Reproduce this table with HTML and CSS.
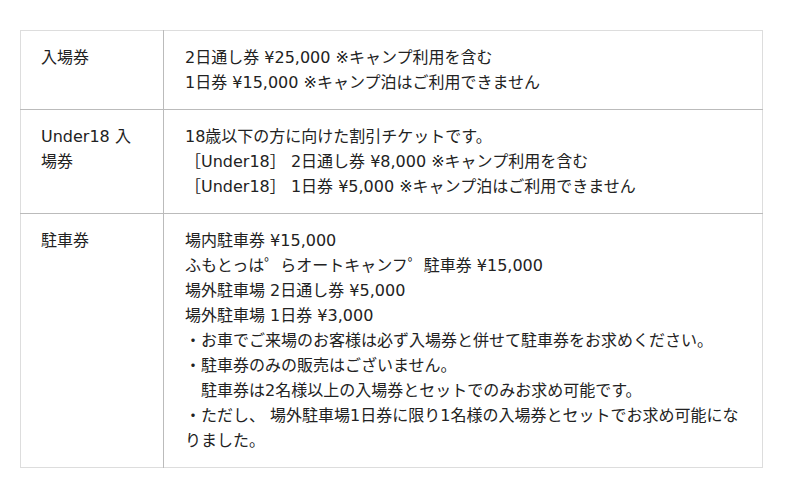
FILE: index.html
```html
<!DOCTYPE html>
<html lang="ja">
<head>
<meta charset="utf-8">
<link rel="stylesheet" href="styles.css">
</head>
<body>
<div class="wrap">
<table class="tickets">
<tbody>
<tr>
<th>入場券</th>
<td>2日通し券 ¥25,000 ※キャンプ利用を含む<br>1日券 ¥15,000 ※キャンプ泊はご利用できません</td>
</tr>
<tr>
<th>Under18 入場券</th>
<td>18歳以下の方に向けた割引チケットです。<br>［Under18］ 2日通し券 ¥8,000 ※キャンプ利用を含む<br>［Under18］ 1日券 ¥5,000 ※キャンプ泊はご利用できません</td>
</tr>
<tr>
<th>駐車券</th>
<td>場内駐車券 ¥15,000<br>ふもとっは&#x309C;らオートキャンフ&#x309C;駐車券 ¥15,000<br>場外駐車場 2日通し券 ¥5,000<br>場外駐車場 1日券 ¥3,000<br>・お車でご来場のお客様は必ず入場券と併せて駐車券をお求めください。<br>・駐車券のみの販売はございません。<br>　駐車券は2名様以上の入場券とセットでのみお求め可能です。<br>・ただし、 場外駐車場1日券に限り1名様の入場券とセットでお求め可能になりました。</td>
</tr>
</tbody>
</table>
</div>
</body>
</html>
```
FILE: styles.css
```css
html, body {
  margin: 0;
  padding: 0;
  background: #fff;
}
body {
  font-family: "DejaVu Sans", "Noto Sans CJK JP", sans-serif;
  font-size: 16px;
  line-height: 25px;
  color: #222;
}
.wrap {
  padding: 30px 38px 0 20px;
}
.tickets {
  width: 743px;
  border-collapse: collapse;
  border: 1px solid #ddd;
}
.tickets th,
.tickets td {
  text-align: left;
  vertical-align: top;
  font-weight: normal;
  padding: 14px 20px 14px 20px;
  border-top: 1px solid #bbb;
}
.tickets tr:first-child th,
.tickets tr:first-child td {
  border-top: 1px solid #ddd;
}
.tickets th {
  width: 102px;
  border-right: 1px solid #bbb;
}
.tickets td {
  padding-left: 21px;
}
```
